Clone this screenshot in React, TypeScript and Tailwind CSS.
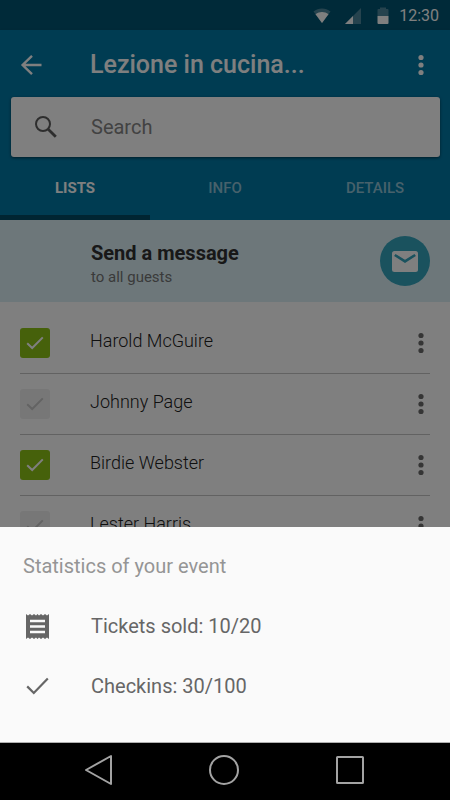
import React, { useState } from 'react'

const guests = [
    { name: 'Harold McGuire', checkedIn: true },
    { name: 'Johnny Page', checkedIn: false },
    { name: 'Birdie Webster', checkedIn: true },
    { name: 'Lester Harris', checkedIn: false },
]

const tabs = ['LISTS', 'INFO', 'DETAILS']

function Dots() {
    return (
        <svg width="6" height="22" viewBox="0 0 6 22" fill="currentColor" aria-hidden="true">
            <circle cx="3" cy="3.5" r="2.6" />
            <circle cx="3" cy="11" r="2.6" />
            <circle cx="3" cy="18.5" r="2.6" />
        </svg>
    )
}

function StatusBar() {
    return (
        <div className="flex h-[30px] shrink-0 items-center justify-end bg-[#005472] pt-0.5 pr-[11px] text-white">
            <svg className="mr-[14px]" width="18" height="16" viewBox="0 0 18 16" aria-hidden="true">
                <path d="M0.5 3.6C5.5 -0.4 12.5 -0.4 17.5 3.6L9 15z" fill="currentColor" opacity="0.3" />
                <path d="M2.5 6.2C6.5 3.2 11.5 3.2 15.5 6.2L9 15z" fill="currentColor" />
            </svg>
            <svg className="mr-4" width="16" height="16" viewBox="0 0 16 16" aria-hidden="true">
                <path d="M16 0v16H0z" fill="currentColor" opacity="0.3" />
                <path d="M8 8v8H0z" fill="currentColor" />
            </svg>
            <svg className="mr-[10px]" width="12" height="18" viewBox="0 0 12 18" aria-hidden="true">
                <path d="M3 0.5h6V2h1.5Q11.5 2 11.5 3v6H0.5V3Q0.5 2 1.5 2H3z" fill="currentColor" opacity="0.3" />
                <path d="M0.5 9h11v7q0 1-1 1h-9q-1 0-1-1z" fill="currentColor" />
            </svg>
            <span className="text-base">12:30</span>
        </div>
    )
}

function Header() {
    const [active, setActive] = useState('LISTS')

    return (
        <header className="shrink-0 bg-[#0078a5] text-white shadow-sm">
            <div className="flex h-[67px] items-center px-5 pt-[3px]">
                <button aria-label="Back" className="w-[70px]">
                    <svg width="22" height="22" viewBox="0 0 22 22" fill="none" stroke="currentColor" strokeWidth="2.4" aria-hidden="true">
                        <path d="M21.5 11H3M12 1.8L2.6 11L12 20.2" />
                    </svg>
                </button>
                <h1 className="flex-1 text-[25px] font-medium">Lezione in cucina...</h1>
                <button aria-label="More options" className="flex w-[18px] justify-center">
                    <Dots />
                </button>
            </div>
            <div className="mr-[10px] ml-[11px] flex h-[60px] items-center rounded-[3px] bg-white pl-6 shadow-[0_1px_3px_rgba(0,0,0,0.5)]">
                <svg className="mr-[34px] text-[#5c5c5c]" width="22" height="22" viewBox="0 0 22 22" fill="none" stroke="currentColor" aria-hidden="true">
                    <circle cx="8" cy="8" r="7" strokeWidth="2" />
                    <path d="M13.2 13.2l7.6 7.6" strokeWidth="2.8" />
                </svg>
                <input
                    type="text"
                    aria-label="Search"
                    placeholder="Search"
                    className="min-w-0 flex-1 bg-transparent text-xl text-gray-800 outline-none placeholder:text-[#858585]"
                />
            </div>
            <nav className="grid h-[63px] grid-cols-3">
                {tabs.map(tab => (
                    <button
                        key={tab}
                        onClick={() => setActive(tab)}
                        className={`border-b-[5px] pt-1 text-[15px] ${active === tab ? 'border-[#004a64] font-bold' : 'border-transparent font-medium text-[#8ec3d7]'}`}
                    >{tab}</button>
                ))}
            </nav>
        </header>
    )
}

function GuestRow({ name, checkedIn }: { name: string; checkedIn: boolean }) {
    const [checked, setChecked] = useState(checkedIn)

    return (
        <li className="flex h-[61px] items-center border-b border-[#c4c4c4]">
            <label className="flex flex-1 items-center">
                <span className="mr-10 grid size-[30px] place-items-center">
                    <input
                        type="checkbox"
                        checked={checked}
                        onChange={() => setChecked(!checked)}
                        className="peer col-start-1 row-start-1 size-[30px] appearance-none rounded-[3px] bg-[#efefef] checked:bg-[#8cc216]"
                    />
                    <svg
                        className="pointer-events-none z-0 col-start-1 row-start-1 text-[#c6c6c6] peer-checked:text-white"
                        width="18"
                        height="14"
                        viewBox="0 0 18 14"
                        fill="none"
                        stroke="currentColor"
                        strokeWidth="2"
                        aria-hidden="true"
                    >
                        <path d="M1.2 7.2L6.2 12L16.8 1.4" />
                    </svg>
                </span>
                <span className="pb-1 text-lg font-light text-[#202020]">{name}</span>
            </label>
            <button aria-label={`Options for ${name}`} className="flex w-[18px] justify-center text-[#6a6a6a]">
                <Dots />
            </button>
        </li>
    )
}

function StatsSheet() {
    return (
        <section className="absolute inset-x-0 bottom-0 border-b border-[#b0b0b0] bg-[#fafafa] px-[23px] pt-[25px] pb-[26px] text-xl text-[#666]">
            <h2 className="h-11 text-[#959595]">Statistics of your event</h2>
            <p className="flex h-[60px] items-center">
                <svg className="mr-[42px] ml-[3px]" width="23" height="25" viewBox="0 0 23 25" aria-hidden="true">
                    <path
                        d="M0 0l2 1.5L4 0l2 1.5L8 0l2 1.5L11.5 0L13 1.5L15 0l2 1.5L19 0l2 1.5L23 0v25l-2-1.5L19 25l-2-1.5L15 25l-2-1.5L11.5 25L10 23.5L8 25l-2-1.5L4 25l-2-1.5L0 25z"
                        fill="currentColor"
                    />
                    <path d="M4 7h15M4 12.5h15M4 18h15" stroke="#fafafa" strokeWidth="2.6" />
                </svg>
                Tickets sold: 10/20
            </p>
            <p className="flex h-[60px] items-center">
                <svg className="mr-[42px] ml-[3px]" width="23" height="18" viewBox="0 0 23 18" fill="none" stroke="currentColor" strokeWidth="2.2" aria-hidden="true">
                    <path d="M1.2 9.4L7.8 16L21.8 1.6" />
                </svg>
                Checkins: 30/100
            </p>
        </section>
    )
}

export default function App() {
    return (
        <div className="flex h-screen flex-col bg-black font-['Roboto','Liberation_Sans',sans-serif]">
            <div className="relative flex min-h-0 flex-1 flex-col overflow-hidden bg-white">
                <StatusBar />
                <Header />
                <div className="flex h-[82px] shrink-0 items-center bg-[#daeff5] pr-5 pl-[91px]">
                    <div className="flex-1 pt-2">
                        <h2 className="text-xl leading-6 font-bold text-[#303030]">Send a message</h2>
                        <p className="text-[15px] leading-6 text-[#757575]">to all guests</p>
                    </div>
                    <button aria-label="Send a message" className="grid size-[50px] place-items-center rounded-full bg-[#34a4bd] text-white">
                        <svg width="26" height="21" viewBox="0 0 26 21" aria-hidden="true">
                            <rect width="26" height="21" rx="2.5" fill="currentColor" />
                            <path d="M2.8 4L13 10.4L23.2 4" fill="none" stroke="#34a4bd" strokeWidth="2.6" />
                        </svg>
                    </button>
                </div>
                <ul className="mx-5 pt-[11px]">
                    {guests.map(guest => (
                        <GuestRow key={guest.name} {...guest} />
                    ))}
                </ul>
                <div className="absolute inset-0 bg-black/50" />
                <StatsSheet />
            </div>
            <nav className="flex h-[57px] shrink-0 items-center justify-center gap-24 pr-0.5 pb-1 text-[#a3a3a3]">
                <button aria-label="Back">
                    <svg width="30" height="32" viewBox="0 0 30 32" fill="none" stroke="currentColor" strokeWidth="2" strokeLinejoin="round" aria-hidden="true">
                        <path d="M28 2v28L3 16z" />
                    </svg>
                </button>
                <button aria-label="Home">
                    <svg width="30" height="32" viewBox="0 0 30 32" fill="none" stroke="currentColor" strokeWidth="2" aria-hidden="true">
                        <circle cx="15" cy="16" r="14" />
                    </svg>
                </button>
                <button aria-label="Recent apps">
                    <svg width="30" height="32" viewBox="0 0 30 32" fill="none" stroke="currentColor" strokeWidth="2" strokeLinejoin="round" aria-hidden="true">
                        <rect x="2" y="3" width="26" height="26" rx="0.5" />
                    </svg>
                </button>
            </nav>
        </div>
    )
}
